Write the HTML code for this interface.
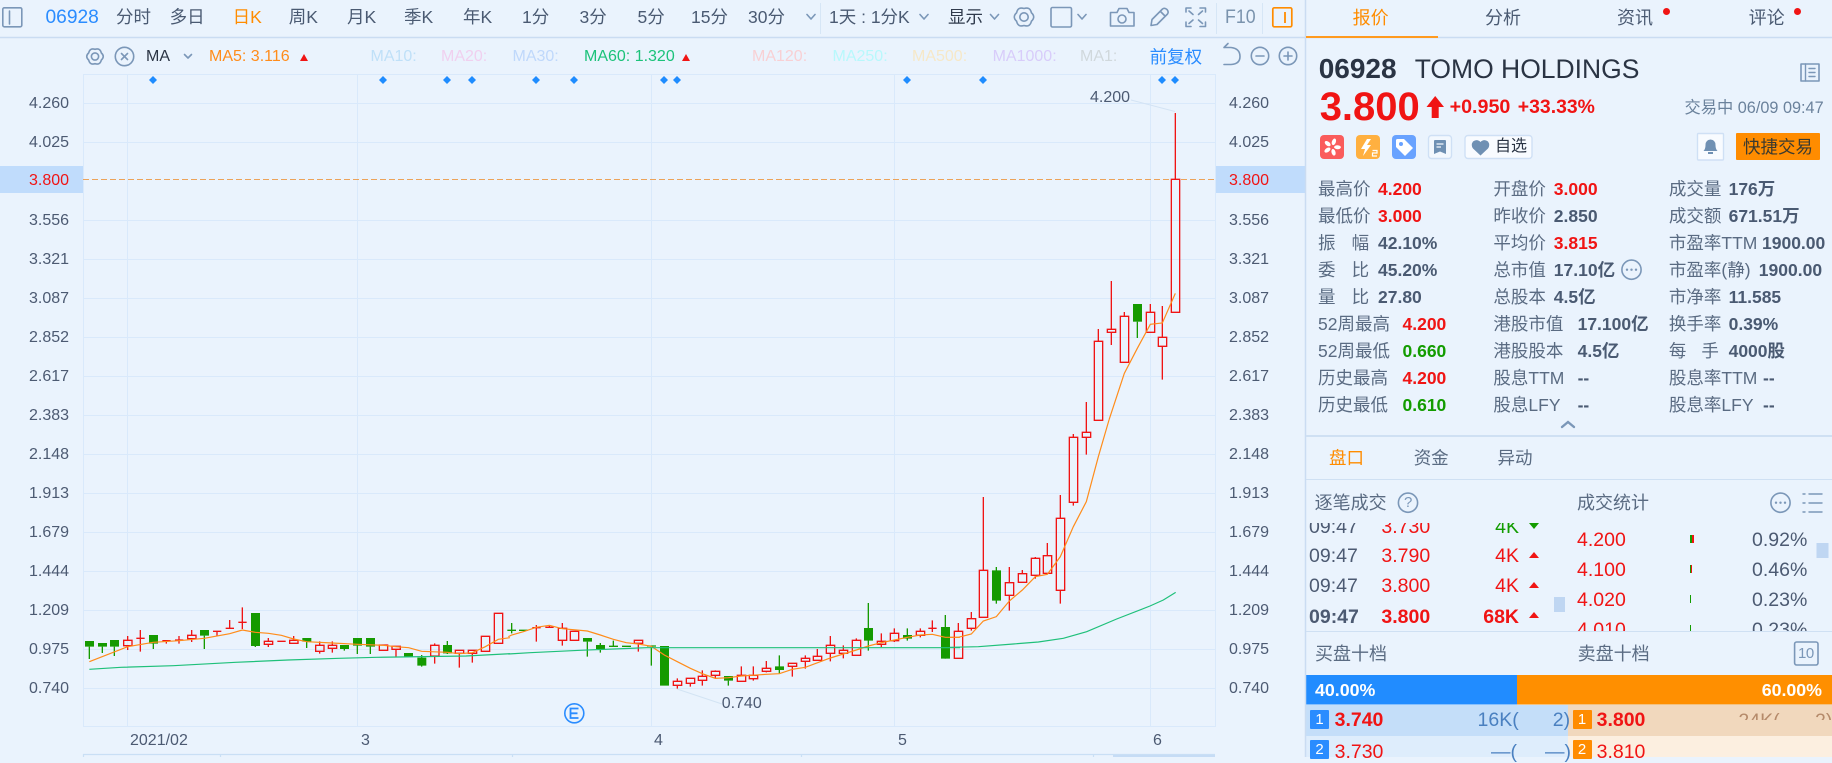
<!DOCTYPE html>
<html lang="zh"><head><meta charset="utf-8"><title>06928</title>
<style>
html,body{margin:0;padding:0}
body{width:1832px;height:757px;overflow:hidden;background:#eaf3fd;position:relative;font-family:"Liberation Sans","Noto Sans CJK SC",sans-serif;color:#4c5a72}
svg.a{position:absolute;left:0;top:0}
.t{position:absolute;white-space:nowrap;line-height:20px;height:20px;font-size:17.5px}
.ax{font-size:16px;color:#4c5a72;margin-top:1px}
.ma{font-size:16px}
.tb{color:#4a5a72}
.l{color:#5a6b82;margin-top:.5px}
.l+.t{margin-top:.5px}
b{font-weight:700;color:#4a5a72}
.r,b.r{color:#f01414}
.g,b.g{color:#139c00}
.clip{position:absolute;overflow:hidden}
.n{font-size:19.5px}
.clip .n{margin-top:1px}
.bd{position:absolute;width:19px;height:19px;color:#fff;font-size:15px;line-height:19px;text-align:center;border-radius:1px}
</style></head><body>

<svg class="a" width="1832" height="757" viewBox="0 0 1832 757" fill="none">
<!-- backgrounds -->
<rect x="0" y="166" width="83" height="27" fill="#c0dcfc"/>
<rect x="1215" y="166" width="90" height="27" fill="#c0dcfc"/>
<rect x="1306" y="705" width="262" height="31" fill="#c4def9"/>
<rect x="1568" y="705" width="264" height="31" fill="#f1d8bd"/>
<rect x="1306" y="736" width="262" height="21" fill="#deedfc"/>
<rect x="1568" y="736" width="264" height="21" fill="#fcefe0"/>
<rect x="1306" y="675" width="211" height="29.5" fill="#218cff"/>
<rect x="1517" y="675" width="315" height="29.5" fill="#ff8f00"/>
<!-- frame lines -->
<path d="M0 37.5H1832" stroke="#cadcf2" stroke-width="1.5"/>
<path d="M1305.5 0V757" stroke="#cadcf2" stroke-width="1.5"/>
<path d="M1306 436H1832" stroke="#cfe0f3" stroke-width="2"/>
<path d="M1306 479.5H1832M1306 631.5H1832" stroke="#cfe0f3" stroke-width="1"/>
<rect x="1306" y="36" width="132" height="2" fill="#ff9a1f"/>
<path d="M820.5 3V34M1216.5 3V34M1262.5 3V34" stroke="#d6e6f6"/>
<!-- grid -->
<g stroke="#d9e9fb" stroke-width="1">
<path d="M83.5 74.5H1215.5V726.5H83.5Z"/>
<path d="M84 103.5H1215M84 142.5H1215M84 220.5H1215M84 259.5H1215M84 298.5H1215M84 337.5H1215M84 376.5H1215M84 415.5H1215M84 454.5H1215M84 493.5H1215M84 532.5H1215M84 571.5H1215M84 610.5H1215M84 649.5H1215M84 688.5H1215"/>
<path d="M127.5 75V726M357.5 75V726M651.5 75V726M894.5 75V726M1150.5 75V726"/>
</g>
<!-- bottom strip -->
<path d="M83 754.5H1215M83.5 754V757M220.5 755V757M512.5 755V757M801.5 755V757M1093.5 755V757" stroke="#c9dff5" stroke-width="1.2"/>
<rect x="1113" y="755" width="102" height="2" fill="#c6dcf5"/>
<!-- dashes -->
<path d="M83 179.5H1215" stroke="#eca35a" stroke-width="1" stroke-dasharray="6 3"/>
<!-- markers -->
<g fill="#1e8cff">
<path d="M153 76l4 4-4 4-4-4zM383 76l4 4-4 4-4-4zM447 76l4 4-4 4-4-4zM472 76l4 4-4 4-4-4zM536 76l4 4-4 4-4-4zM574 76l4 4-4 4-4-4zM664 76l4 4-4 4-4-4zM677 76l4 4-4 4-4-4zM907 76l4 4-4 4-4-4zM983 76l4 4-4 4-4-4zM1162 76l4 4-4 4-4-4zM1175 76l4 4-4 4-4-4z"/>
</g>
<!-- leaders -->
<path d="M1131 100L1175 111.5M677 689L722 704" stroke="#d3e3f4" stroke-width="1"/>

<!-- zoom-8 segment -->
<g transform="translate(60 580) scale(.33333)" stroke-width="4">
<path stroke="#f01414" d="M203 168V181M203 197V210M191 181h25v16h-25zM241 150V215M229 175h25M319 180V191M307 182h25M357 168V191M345 180h25M395 150V166M395 176V186M383 166h25v10h-25zM471 152V169M459 154h25M509 120V145M497 145h25M547 82V147M535 127h25M625 174V184M625 193V201M613 184h25v9h-25zM652 184h25M701 168V181M689 181h25v9h-25zM779 184V196M779 214V221M767 196h25v18h-25zM817 184V196M817 205V218M805 196h25v9h-25zM958 195h25v16h-25zM1008 208V231M996 199h25v9h-25zM1124 190V196M1124 228V251M1112 196h25v32h-25zM1198 220V263M1186 211h25v9h-25zM1237 220V248M1225 211h25v9h-25zM1264 169h25v45h-25zM1303 100h25v90h-25z"/>
<path fill="#159a00" d="M75 183h27v17h-27zM114 189h27v11h-27zM150 180h27v20h-27zM267 165h27v26h-27zM420 150h27v17h-27zM573 99h27v99h-27zM727 174h27v11h-27zM840 195h27v12h-27zM879 174h27v23h-27zM918 174h27v26h-27zM1032 219h27v12h-27zM1072 233h27v24h-27zM1149 195h27v25h-27z"/>
<path stroke="#159a00" d="M88 200V237M127 200V219M163 200V228M280 191V207M433 167V207M586 198V201M740 185V204M853 207V212M892 197V222M931 200V222M1085 225V260M1162 183V222"/>
<path stroke="#ff8c1a" stroke-width="3.6" d="M88 245L203 200L280 187L357 182L433 175L509 161L547 150L586 157L625 160L664 166L701 177L740 185L817 189L892 193L970 196L1008 200L1046 203L1085 214L1162 217L1198 221L1237 218L1276 200L1315 178L1350 173"/>
<path stroke="#1fc07a" stroke-width="3.6" d="M88 268L183 262L340 257L527 247L684 240L837 235L950 232L1218 228L1350 221"/>
</g>

<!-- zoom-9 segment (x >= 510) -->
<g transform="translate(500 580) scale(.33333)" stroke-width="4">
<path stroke="#f01414" d="M109 135V185M97 143h25M136 142h25M148 135V142M187 129V145M187 181V197M175 145h25v36h-25zM211 154h25v27h-25zM415 190V215M403 181h25v9h-25zM532 295V304M532 316V326M520 304h25v12h-25zM571 310V320M559 295h25v15h-25zM607 271V289M607 301V317M595 289h25v12h-25zM646 271V274M646 286V295M634 274h25v12h-25zM724 259V286M712 286h25v18h-25zM760 259V286M760 296V302M748 286h25v10h-25zM799 243V265M799 274V277M787 265h25v9h-25zM877 259V290M865 250h25v9h-25zM916 226V235M916 244V266M904 235h25v9h-25zM952 207V229M940 229h25v12h-25zM991 168V196M991 220V244M979 196h25v24h-25zM1030 196V211M1030 220V235M1018 211h25v9h-25zM1069 175V181M1057 181h25v45h-25zM1144 160V184M1144 193V201M1132 184h25v9h-25zM1183 145V160M1183 182V186M1171 160h25v22h-25zM1261 145V154M1261 166V172M1249 154h25v12h-25zM1297 121V156M1285 145h25"/>
<path fill="#159a00" d="M249 174h27v11h-27zM288 195h27v12h-27zM480 198h27v119h-27zM672 288h27v14h-27zM825 259h27v11h-27zM1092 144h27v38h-27zM1209 165h27v11h-27zM1323 141h27v95h-27z"/>
<path stroke="#159a00" d="M35 129V160M22 151h26M57 151h26M262 185V230M301 189V218M340 182V199M327 199h27M366 199h27M441 198h27M454 198V257M685 302V317M838 226V280M1105 69V212M1222 145V182M1336 105V236"/>
<path stroke="#ff8c1a" stroke-width="3.6" d="M25 170L35 165L70 155L109 142L148 136L187 146L262 153L301 165L340 178L379 188L415 192L454 199L493 225L532 245L571 265L607 281L646 295L685 293L724 288L799 283L838 281L877 268L916 262L991 234L1069 210L1105 198L1144 188L1222 172L1261 165L1297 163L1336 172L1380 172"/>
<path stroke="#1fc07a" stroke-width="3.6" d="M25 222L90 218L240 211L440 203L1380 203"/>
</g>

<!-- zoom-7 segment -->
<g transform="translate(950 420) scale(.33333)" stroke-width="4">
<path stroke="#f01414" d="M25 609V634M13 634h25v81h-25zM64 576V596M64 625V632M52 596h25v29h-25zM100 231V451M88 451h25v141h-25zM178 441V488M178 526V572M166 488h25v38h-25zM217 450V461M205 461h25v26h-25zM256 411V415M256 466V476M244 415h25v51h-25zM292 369V407M280 407h25v53h-25zM331 225V295M331 511V551M319 295h25v216h-25zM370 42V52M370 247V257M358 52h25v195h-25zM409 0V37M409 52V104M397 37h25v15h-25z"/>
<path fill="#159a00" d="M126 451h27v91h-27z"/>
<path stroke="#159a00" d="M139 441V551"/>
<path stroke="#ff8c1a" stroke-width="3.6" d="M0 652L25 652L64 642L100 603L139 590L178 543L217 510L256 470L292 463L331 410L370 320L409 245L445 110L477 0"/>
<path stroke="#1fc07a" stroke-width="3.6" d="M0 682L85 680L190 672L265 666L340 655L410 635L500 597L600 558L640 540L677 517"/>
</g>

<!-- zoom-6 segment -->
<g transform="translate(950 90) scale(.33333)" stroke-width="4">
<path stroke="#f01414" d="M409 936V990M445 717V754M433 754h25V991h-25zM484 573V718M484 727V765M472 718h25v9h-25zM523 666V679M511 679h25v138h-25zM601 642V667M589 667h25v60h-25zM637 648V742M637 769V869M625 742h25v27h-25zM676 69V268M664 268h25v399h-25z"/>
<path fill="#159a00" d="M549 642h27v53h-27z"/>
<path stroke="#159a00" d="M562 695V744"/>
<path stroke="#ff8c1a" stroke-width="3.6" d="M477 990L523 850L562 775L601 703L637 699L676 610"/>
</g>

<!-- E marker -->
<circle cx="574.3" cy="713.3" r="9.5" stroke="#2a8cff" stroke-width="1.6"/>
<path d="M578.5 708.5H570.5V718H578.5M570.5 713.3H577.5" stroke="#2a8cff" stroke-width="1.8"/>

<!-- toolbar icons -->
<g stroke="#7b97b8" stroke-width="1.6" stroke-linejoin="round" stroke-linecap="round">
<rect x="2.8" y="7.8" width="19" height="19" rx="1.5"/>
<path d="M9.5 11V24"/>
<path d="M807 14.5L811 19L815 14.5M920 14.5L924 19L928 14.5M990.5 14.5L994.5 19L998.5 14.5M1078 14.5L1082 19L1086 14.5"/>
<!-- gear -->
<path d="M1024 8.5Q1030 6.6 1031.4 12.75Q1036 17 1031.4 21.25Q1030 27.4 1024 25.5Q1018 27.4 1016.6 21.25Q1012 17 1016.6 12.75Q1018 6.6 1024 8.5Z"/>
<circle cx="1024" cy="17" r="4.2"/>
<rect x="1051" y="7.5" width="20.5" height="19.5" rx="1.5"/>
<!-- camera -->
<path d="M1110.5 12.5H1117L1119 8.5H1127L1129 12.5H1134V26H1110.5Z"/>
<circle cx="1122" cy="19" r="4"/>
<!-- pencil -->
<path d="M1151 25.5L1152 19.5L1162.5 9Q1164.5 7.5 1167 9.5Q1169 12 1167.5 14L1157 24.5ZM1160.5 11.5L1165 16"/>
<!-- expand -->
<path d="M1186 12V8H1191M1200 8H1205.5V12M1186 22V26.5H1191M1200 26.5H1205.5V22M1189 11L1193 14.5M1202.5 11L1198.5 14.5M1189 23.5L1193 20M1202.5 23.5L1198.5 20"/>
<!-- MA row left -->
<path d="M95 49.3Q100.1 47.7 101.3 52.9Q105.2 56.5 101.3 60.1Q100.1 65.3 95 63.7Q89.9 65.3 88.7 60.1Q84.8 56.5 88.7 52.9Q89.9 47.7 95 49.3Z"/>
<circle cx="95" cy="56.5" r="3.6"/>
<circle cx="124.5" cy="56.5" r="9.2"/>
<path d="M121.5 53.5L127.5 59.5M127.5 53.5L121.5 59.5"/>
<path d="M184.5 54.5L188 58L191.5 54.5"/>
<!-- undo, minus, plus -->
<path d="M1224 47.5H1231Q1240 48.5 1240 56.5Q1240 64 1231 64.5H1224M1224 47.5L1228 43.5"/>
<circle cx="1260" cy="56" r="8.7"/>
<path d="M1256 56H1264"/>
<circle cx="1288" cy="56" r="8.7"/>
<path d="M1284 56H1292M1288 52V60"/>
<!-- top-right small box -->
<rect x="1801" y="64" width="18" height="17"/>
<path d="M1805.5 64V81M1809 68.5H1815M1809 72.5H1815M1809 76.5H1815" stroke-width="1.4"/>
<!-- more circle -->
<circle cx="1631.5" cy="269.7" r="9.6"/>
<circle cx="1408" cy="502.7" r="9.6"/>
<circle cx="1780.5" cy="502.7" r="9.6"/>
<path d="M1562 427L1568 422L1574 427" stroke-width="2.4" stroke-linejoin="miter"/>
<path d="M1803 494H1805M1803 503H1805M1803 512H1805M1809 494H1822M1809 503H1822M1809 512H1822" stroke-width="1.4"/>
<rect x="1794.6" y="642" width="23.4" height="23" rx="2"/>
</g>
<g fill="#7b97b8">
<circle cx="1627" cy="269.7" r="1.2"/><circle cx="1631.5" cy="269.7" r="1.2"/><circle cx="1636" cy="269.7" r="1.2"/>
<circle cx="1776" cy="502.7" r="1.2"/><circle cx="1780.5" cy="502.7" r="1.2"/><circle cx="1785" cy="502.7" r="1.2"/>
</g>
<rect x="1272.8" y="7.8" width="19" height="19" rx="1.5" stroke="#ff8c00" stroke-width="1.7"/>
<path d="M1285 12V23" stroke="#ff8c00" stroke-width="1.8"/>

<!-- MA triangles -->
<path d="M300 61L308 61L304 54ZM682 61L690 61L686 54Z" fill="#f01414"/>

<!-- price arrow -->
<path d="M1435.2 96L1444 107H1438.7V118H1431.7V107H1426.5Z" fill="#f01414"/>

<!-- red dots -->
<circle cx="1666.5" cy="11.5" r="3.5" fill="#f01414"/>
<circle cx="1797.5" cy="11.5" r="3.5" fill="#f01414"/>

<!-- tag icons -->
<rect x="1320" y="135" width="24" height="24" rx="4" fill="#fa5c5c"/>
<g fill="#fff" transform="translate(1332 147)">
<ellipse cx="0" cy="-5.5" rx="2" ry="3.4" transform="rotate(20)"/>
<ellipse cx="0" cy="-5.5" rx="2" ry="3.4" transform="rotate(92)"/>
<ellipse cx="0" cy="-5.5" rx="2" ry="3.4" transform="rotate(164)"/>
<ellipse cx="0" cy="-5.5" rx="2" ry="3.4" transform="rotate(236)"/>
<ellipse cx="0" cy="-5.5" rx="2" ry="3.4" transform="rotate(308)"/>
</g>
<rect x="1356" y="135" width="24" height="24" rx="4" fill="#ffb040"/>
<path d="M1367 139L1361 149H1365L1363 156L1371 145H1367L1371 139Z" fill="#fff"/>
<path d="M1372.5 150.5H1377V153H1372.5V156H1377" stroke="#fff" stroke-width="1.2"/>
<rect x="1392" y="135" width="24" height="24" rx="4" fill="#68a2ff"/>
<path d="M1396 140.5Q1396 139 1397.5 139H1404L1413 148L1405 156L1396 147Z" fill="#fff"/>
<circle cx="1401" cy="144" r="2" fill="#68a2ff"/>
<rect x="1428.5" y="135.5" width="23" height="23" rx="3" fill="#f3f8fe" stroke="#cfe0f5" stroke-width="1.4"/>
<path d="M1434 141Q1434 140 1435 140H1445Q1446 140 1446 141V154L1440 151.5L1434 154Z" fill="#6f90b3"/>
<path d="M1436.5 144H1443.5M1436.5 147H1441" stroke="#f3f8fe" stroke-width="1.3"/>
<rect x="1465" y="135.5" width="67" height="23" rx="3" fill="#f8fbff" stroke="#cfe0f5" stroke-width="1.4"/>
<path d="M1480.5 155.5L1473 148.5Q1470.5 145 1473 141.5Q1477 138.5 1480.5 142Q1484 138.5 1488 141.5Q1490.5 145 1488 148.5Z" fill="#6f90b3"/>
<rect x="1697.5" y="133.5" width="26" height="26.5" rx="1" fill="#f8fbff" stroke="#cfe0f5" stroke-width="1.4"/>
<path d="M1703.5 151Q1705.5 149 1705.5 145Q1705.5 140 1710.5 139.5Q1715.5 140 1715.5 145Q1715.5 149 1717.5 151Z" fill="#6f90b3"/>
<path d="M1708 153H1713" stroke="#6f90b3" stroke-width="2"/>
<rect x="1736" y="133" width="84" height="27" rx="1" fill="#ff8c00"/>

<!-- scroll thumbs -->
<rect x="1554" y="597" width="11" height="15" fill="#bfd6f2"/>
<rect x="1816.5" y="543" width="12" height="15" fill="#bfd6f2"/>
</svg>

<!-- toolbar -->
<div class="t" style="left:45.5px;top:8px;font-size:19.2px;color:#2a8cff">06928</div>
<div class="t tb" style="left:116px;top:7px">分时</div>
<div class="t tb" style="left:169.6px;top:7px">多日</div>
<div class="t" style="left:232.6px;top:7px;color:#ff8c00">日K</div>
<div class="t tb" style="left:288.8px;top:7px">周K</div>
<div class="t tb" style="left:347px;top:7px">月K</div>
<div class="t tb" style="left:404px;top:7px">季K</div>
<div class="t tb" style="left:463px;top:7px">年K</div>
<div class="t tb" style="left:522px;top:7px">1分</div>
<div class="t tb" style="left:579.5px;top:7px">3分</div>
<div class="t tb" style="left:637.5px;top:7px">5分</div>
<div class="t tb" style="left:691px;top:7px">15分</div>
<div class="t tb" style="left:748px;top:7px">30分</div>
<div class="t tb" style="left:829px;top:7px">1天 : 1分K</div>
<div class="t tb" style="left:948px;top:7px;color:#2f3a4c">显示</div>
<div class="t" style="left:1225px;top:7px;font-size:19.5px;color:#7a93ad;transform:scaleX(.91);transform-origin:0 50%">F10</div>

<!-- MA row -->
<div class="t ma" style="left:146px;top:46.5px;color:#2a3444">MA</div>
<div class="t ma" style="left:209px;top:46.5px;color:#ff8c1a">MA5: 3.116</div>
<div class="t ma" style="left:370.5px;top:46.5px;color:#bfe0f8">MA10:</div>
<div class="t ma" style="left:441px;top:46.5px;color:#f0d0ef">MA20:</div>
<div class="t ma" style="left:512.5px;top:46.5px;color:#bfd8fb">MA30:</div>
<div class="t ma" style="left:584px;top:46.5px;color:#1cc27a">MA60: 1.320</div>
<div class="t ma" style="left:752px;top:46.5px;color:#f8d0d4">MA120:</div>
<div class="t ma" style="left:832.5px;top:46.5px;color:#b8f8fc">MA250:</div>
<div class="t ma" style="left:912px;top:46.5px;color:#f6e8c8">MA500:</div>
<div class="t ma" style="left:992.6px;top:46.5px;color:#d8ccfa">MA1000:</div>
<div class="t ma" style="left:1080px;top:46.5px;color:#d0d8dc">MA1:</div>
<div class="t" style="left:1149.6px;top:46.5px;color:#2a8cff">前复权</div>

<!-- axis left -->
<div class="t ax" style="left:29px;top:93px">4.260</div>
<div class="t ax" style="left:29px;top:132px">4.025</div>
<div class="t ax r" style="left:29px;top:169.5px">3.800</div>
<div class="t ax" style="left:29px;top:210px">3.556</div>
<div class="t ax" style="left:29px;top:249px">3.321</div>
<div class="t ax" style="left:29px;top:288px">3.087</div>
<div class="t ax" style="left:29px;top:327px">2.852</div>
<div class="t ax" style="left:29px;top:366px">2.617</div>
<div class="t ax" style="left:29px;top:405px">2.383</div>
<div class="t ax" style="left:29px;top:444px">2.148</div>
<div class="t ax" style="left:29px;top:483px">1.913</div>
<div class="t ax" style="left:29px;top:522px">1.679</div>
<div class="t ax" style="left:29px;top:561px">1.444</div>
<div class="t ax" style="left:29px;top:600px">1.209</div>
<div class="t ax" style="left:29px;top:639px">0.975</div>
<div class="t ax" style="left:29px;top:678px">0.740</div>
<!-- axis right -->
<div class="t ax" style="left:1229px;top:93px">4.260</div>
<div class="t ax" style="left:1229px;top:132px">4.025</div>
<div class="t ax r" style="left:1229px;top:169.5px">3.800</div>
<div class="t ax" style="left:1229px;top:210px">3.556</div>
<div class="t ax" style="left:1229px;top:249px">3.321</div>
<div class="t ax" style="left:1229px;top:288px">3.087</div>
<div class="t ax" style="left:1229px;top:327px">2.852</div>
<div class="t ax" style="left:1229px;top:366px">2.617</div>
<div class="t ax" style="left:1229px;top:405px">2.383</div>
<div class="t ax" style="left:1229px;top:444px">2.148</div>
<div class="t ax" style="left:1229px;top:483px">1.913</div>
<div class="t ax" style="left:1229px;top:522px">1.679</div>
<div class="t ax" style="left:1229px;top:561px">1.444</div>
<div class="t ax" style="left:1229px;top:600px">1.209</div>
<div class="t ax" style="left:1229px;top:639px">0.975</div>
<div class="t ax" style="left:1229px;top:678px">0.740</div>
<!-- chart labels -->
<div class="t ax" style="left:1090px;top:87px">4.200</div>
<div class="t ax" style="left:721.7px;top:692.5px">0.740</div>
<div class="t ax" style="left:130px;top:729.5px">2021/02</div>
<div class="t ax" style="left:361px;top:729.5px">3</div>
<div class="t ax" style="left:654px;top:729.5px">4</div>
<div class="t ax" style="left:898px;top:729.5px">5</div>
<div class="t ax" style="left:1153px;top:729.5px">6</div>

<!-- right tabs -->
<div class="t" style="left:1352.6px;top:7.5px;font-size:18px;color:#ff8c00">报价</div>
<div class="t tb" style="left:1485px;top:7.5px;font-size:18px">分析</div>
<div class="t tb" style="left:1617px;top:7.5px;font-size:18px">资讯</div>
<div class="t tb" style="left:1748.6px;top:7.5px;font-size:18px">评论</div>

<!-- header -->
<div class="t" style="left:1318.7px;top:59px;font-size:28px;font-weight:700;color:#2a3444">06928</div>
<div class="t" style="left:1414.7px;top:59px;font-size:26.5px;color:#2a3444">TOMO HOLDINGS</div>
<div class="t r" style="left:1319.7px;top:96.5px;font-size:40px;font-weight:700">3.800</div>
<div class="t r" style="left:1449.6px;top:97px;font-size:19.7px;font-weight:700">+0.950</div>
<div class="t r" style="left:1517.8px;top:97px;font-size:19.4px;font-weight:700">+33.33%</div>
<div class="t" style="left:1684.5px;top:98px;font-size:16.25px;color:#6b829c">交易中 06/09 09:47</div>
<div class="t" style="left:1495px;top:137px;font-size:16px;color:#2a3444">自选</div>
<div class="t" style="left:1743px;top:136.5px;color:#3a3a30">快捷交易</div>

<!-- data col 1 -->
<div class="t l" style="left:1318px;top:178.3px">最高价</div><div class="t" style="left:1378px;top:178.3px"><b class="r">4.200</b></div>
<div class="t l" style="left:1318px;top:205.3px">最低价</div><div class="t" style="left:1378px;top:205.3px"><b class="r">3.000</b></div>
<div class="t l" style="left:1318px;top:232.5px">振</div><div class="t l" style="left:1351.6px;top:232.5px">幅</div><div class="t" style="left:1378px;top:232.5px"><b>42.10%</b></div>
<div class="t l" style="left:1318px;top:259.7px">委</div><div class="t l" style="left:1351.6px;top:259.7px">比</div><div class="t" style="left:1378px;top:259.7px"><b>45.20%</b></div>
<div class="t l" style="left:1318px;top:286.7px">量</div><div class="t l" style="left:1351.6px;top:286.7px">比</div><div class="t" style="left:1378px;top:286.7px"><b>27.80</b></div>
<div class="t l" style="left:1318px;top:313.7px">52周最高</div><div class="t" style="left:1402.5px;top:313.7px"><b class="r">4.200</b></div>
<div class="t l" style="left:1318px;top:340.7px">52周最低</div><div class="t" style="left:1402.5px;top:340.7px"><b class="g">0.660</b></div>
<div class="t l" style="left:1318px;top:367.7px">历史最高</div><div class="t" style="left:1402.5px;top:367.7px"><b class="r">4.200</b></div>
<div class="t l" style="left:1318px;top:394.7px">历史最低</div><div class="t" style="left:1402.5px;top:394.7px"><b class="g">0.610</b></div>
<!-- data col 2 -->
<div class="t l" style="left:1493.4px;top:178.3px">开盘价</div><div class="t" style="left:1553.8px;top:178.3px"><b class="r">3.000</b></div>
<div class="t l" style="left:1493.4px;top:205.3px">昨收价</div><div class="t" style="left:1553.8px;top:205.3px"><b>2.850</b></div>
<div class="t l" style="left:1493.4px;top:232.5px">平均价</div><div class="t" style="left:1553.8px;top:232.5px"><b class="r">3.815</b></div>
<div class="t l" style="left:1493.4px;top:259.7px">总市值</div><div class="t" style="left:1553.8px;top:259.7px"><b>17.10亿</b></div>
<div class="t l" style="left:1493.4px;top:286.7px">总股本</div><div class="t" style="left:1553.8px;top:286.7px"><b>4.5亿</b></div>
<div class="t l" style="left:1493.4px;top:313.7px">港股市值</div><div class="t" style="left:1577.6px;top:313.7px"><b>17.100亿</b></div>
<div class="t l" style="left:1493.4px;top:340.7px">港股股本</div><div class="t" style="left:1577.6px;top:340.7px"><b>4.5亿</b></div>
<div class="t l" style="left:1493.4px;top:367.7px">股息TTM</div><div class="t" style="left:1577.6px;top:367.7px"><b>--</b></div>
<div class="t l" style="left:1493.4px;top:394.7px">股息LFY</div><div class="t" style="left:1577.6px;top:394.7px"><b>--</b></div>
<!-- data col 3 -->
<div class="t l" style="left:1668.9px;top:178.3px">成交量</div><div class="t" style="left:1728.6px;top:178.3px"><b>176万</b></div>
<div class="t l" style="left:1668.9px;top:205.3px">成交额</div><div class="t" style="left:1728.6px;top:205.3px"><b>671.51万</b></div>
<div class="t l" style="left:1668.9px;top:232.5px">市盈率TTM</div><div class="t" style="left:1762px;top:232.5px"><b>1900.00</b></div>
<div class="t l" style="left:1668.9px;top:259.7px">市盈率(静)</div><div class="t" style="left:1758.8px;top:259.7px"><b>1900.00</b></div>
<div class="t l" style="left:1668.9px;top:286.7px">市净率</div><div class="t" style="left:1728.6px;top:286.7px"><b>11.585</b></div>
<div class="t l" style="left:1668.9px;top:313.7px">换手率</div><div class="t" style="left:1728.6px;top:313.7px"><b>0.39%</b></div>
<div class="t l" style="left:1668.9px;top:340.7px">每</div><div class="t l" style="left:1701.4px;top:340.7px">手</div><div class="t" style="left:1728.6px;top:340.7px"><b>4000股</b></div>
<div class="t l" style="left:1668.9px;top:367.7px">股息率TTM</div><div class="t" style="left:1763px;top:367.7px"><b>--</b></div>
<div class="t l" style="left:1668.9px;top:394.7px">股息率LFY</div><div class="t" style="left:1763px;top:394.7px"><b>--</b></div>

<!-- sub tabs -->
<div class="t" style="left:1329px;top:447.7px;color:#ff8c00">盘口</div>
<div class="t l" style="left:1413.7px;top:447.7px">资金</div>
<div class="t l" style="left:1497.5px;top:447.7px">异动</div>
<div class="t l" style="left:1314.6px;top:492.7px;font-size:18px">逐笔成交</div>
<div class="t" style="left:1404px;top:492.7px;font-size:15px;color:#7b97b8">?</div>
<div class="t l" style="left:1577px;top:492.7px;font-size:18px">成交统计</div>

<!-- trades -->
<div class="clip" style="left:1306px;top:523px;width:240px;height:108px">
<div class="t n" style="left:3px;top:-7px">09:47</div><div class="t n r" style="left:75.4px;top:-7px">3.730</div><div class="t n g" style="right:27px;top:-7px">4K</div>
<div style="position:absolute;left:223px;top:0;border-left:5px solid transparent;border-right:5px solid transparent;border-top:6px solid #139c00"></div>
<div class="t n" style="left:3px;top:22.3px">09:47</div><div class="t n r" style="left:75.4px;top:22.3px">3.790</div><div class="t n r" style="right:27px;top:22.3px">4K</div>
<div style="position:absolute;left:223px;top:29px;border-left:5.5px solid transparent;border-right:5.5px solid transparent;border-bottom:6px solid #f01414"></div>
<div class="t n" style="left:3px;top:52.3px">09:47</div><div class="t n r" style="left:75.4px;top:52.3px">3.800</div><div class="t n r" style="right:27px;top:52.3px">4K</div>
<div style="position:absolute;left:223px;top:59px;border-left:5.5px solid transparent;border-right:5.5px solid transparent;border-bottom:6px solid #f01414"></div>
<div class="t n" style="left:3px;top:82.7px;font-weight:700">09:47</div><div class="t n r" style="left:75.4px;top:82.7px;font-weight:700">3.800</div><div class="t n r" style="right:27px;top:82.7px;font-weight:700">68K</div>
<div style="position:absolute;left:223px;top:89px;border-left:5.5px solid transparent;border-right:5.5px solid transparent;border-bottom:6px solid #f01414"></div>
</div>

<!-- stats -->
<div class="clip" style="left:1570px;top:523px;width:242px;height:108px">
<div class="t n r" style="left:7px;top:5.7px">4.200</div><div class="t n" style="right:4.7px;top:5.7px">0.92%</div>
<div class="t n r" style="left:7px;top:35.7px">4.100</div><div class="t n" style="right:4.7px;top:35.7px">0.46%</div>
<div class="t n r" style="left:7px;top:65.7px">4.020</div><div class="t n" style="right:4.7px;top:65.7px">0.23%</div>
<div class="t n r" style="left:7px;top:95.7px">4.010</div><div class="t n" style="right:4.7px;top:95.7px">0.23%</div>
<div style="position:absolute;left:120px;top:12px;width:1.5px;height:8px;background:#139c00"></div><div style="position:absolute;left:121.5px;top:12px;width:2.5px;height:8px;background:#f01414"></div>
<div style="position:absolute;left:120px;top:42px;width:1px;height:8px;background:#139c00"></div><div style="position:absolute;left:121px;top:42px;width:1px;height:8px;background:#f01414"></div>
<div style="position:absolute;left:120px;top:72px;width:1px;height:8px;background:#139c00"></div>
<div style="position:absolute;left:120px;top:102px;width:1px;height:6px;background:#139c00"></div>
</div>

<!-- order book -->
<div class="t l" style="left:1315px;top:643.7px;font-size:18px">买盘十档</div>
<div class="t l" style="left:1577.6px;top:643.7px;font-size:18px">卖盘十档</div>
<div class="t" style="left:1798px;top:643.5px;font-size:15px;color:#7b97b8;letter-spacing:-.5px">10</div>
<div class="t" style="left:1315px;top:680px;font-size:17.8px;font-weight:700;color:#fff">40.00%</div>
<div class="t" style="right:10px;top:680px;font-size:17.8px;font-weight:700;color:#fff">60.00%</div>

<div class="bd" style="left:1310px;top:710px;background:#2a8cff">1</div>
<div class="t n r" style="left:1334.6px;top:710.3px;font-weight:700">3.740</div>
<div class="t n" style="left:1477.5px;top:710.3px;color:#4a80c0">16K(</div>
<div class="t n" style="left:1552.8px;top:710.3px;color:#4a80c0">2)</div>
<div class="bd" style="left:1572.5px;top:710px;background:#ff8c00">1</div>
<div class="t n r" style="left:1596.6px;top:710.3px;font-weight:700">3.800</div>
<div class="clip" style="left:1730px;top:705px;width:102px;height:15px">
<div class="t n" style="left:8.4px;top:5.3px;color:#b58a6a">24K(</div>
<div class="t n" style="left:85px;top:5.3px;color:#b58a6a">2)</div>
</div>

<div class="bd" style="left:1310px;top:740px;background:#2a8cff">2</div>
<div class="t n r" style="left:1334.6px;top:741.5px">3.730</div>
<div class="t n" style="left:1491px;top:741.5px;color:#4a80c0">—(</div>
<div class="t n" style="left:1545px;top:741.5px;color:#4a80c0">—)</div>
<div class="bd" style="left:1572.5px;top:740px;background:#ff8c00">2</div>
<div class="t n r" style="left:1596.6px;top:741.5px">3.810</div>
</body></html>
